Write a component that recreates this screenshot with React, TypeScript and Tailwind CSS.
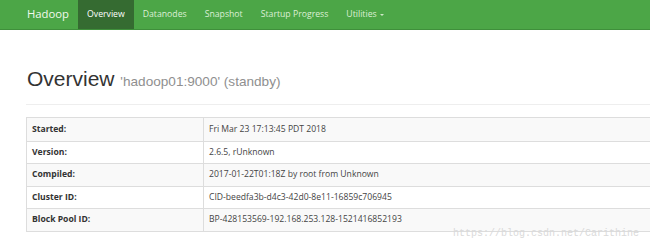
import React from "react";

const rows: [string, string][] = [
  ["Started:", "Fri Mar 23 17:13:45 PDT 2018"],
  ["Version:", "2.6.5, rUnknown"],
  ["Compiled:", "2017-01-22T01:18Z by root from Unknown"],
  ["Cluster ID:", "CID-beedfa3b-d4c3-42d0-8e11-16859c706945"],
  ["Block Pool ID:", "BP-428153569-192.168.253.128-1521416852193"],
];

export default function App() {
  return (
    <div className="relative w-[650px] h-[242px] overflow-hidden bg-white" style={{ fontFamily: '"Open Sans", sans-serif' }}>
      <nav className="h-[30px] bg-[#4ca647] border-b border-[#3f8f3b] flex items-stretch pl-[27px]">
        <div className="flex items-center text-[11.3px] text-[#f2f9ee] pr-[9px]">Hadoop</div>
        <div className="flex items-center px-[9px] bg-[#356b31] text-[8.7px] text-white">Overview</div>
        <div className="flex items-center px-[9px] text-[8.7px] text-[#dcefd6]">Datanodes</div>
        <div className="flex items-center px-[9px] text-[8.7px] text-[#dcefd6]">Snapshot</div>
        <div className="flex items-center px-[9px] text-[8.7px] text-[#dcefd6]">Startup Progress</div>
        <div className="flex items-center px-[9px] text-[8.7px] text-[#dcefd6] gap-[3px]">
          Utilities
          <span className="inline-block w-0 h-0 border-l-[2.5px] border-r-[2.5px] border-t-[2.5px] border-l-transparent border-r-transparent border-t-[#cfe8c8]" />
        </div>
      </nav>
      <div className="pl-[26px]">
        <h1 className="mt-[37px] ml-[1px] leading-[24px] text-[21px] text-[#333]" style={{ fontFamily: '"Liberation Sans", Arial, sans-serif' }}>
          Overview <span className="text-[13.6px] text-[#8f8f8f]">'hadoop01:9000' (standby)</span>
        </h1>
        <div className="mt-[10px] border-t border-[#eeeeee] w-[700px]" />
        <div className="mt-[12px] w-[700px] border border-[#dddddd] text-[8.6px] text-[#333]">
          {rows.map(([k, v], i) => (
            <div
              key={k}
              className={`grid grid-cols-[176px_1fr] h-[22.5px] ${i > 0 ? "border-t border-[#dddddd]" : ""} ${i % 2 === 0 ? "bg-[#f9f9f9]" : "bg-white"}`}
            >
              <div className="flex items-center pl-[5px] font-bold text-[#333]">{k}</div>
              <div className="flex items-center pl-[5px] border-l border-[#dddddd] text-[#444]">{v}</div>
            </div>
          ))}
        </div>
      </div>
      <div className="absolute left-[453px] top-[228px] text-[10px] text-[#dadada] leading-[12px]" style={{ fontFamily: '"Liberation Mono", monospace' }}>
        https://blog.csdn.net/Carithine
      </div>
    </div>
  );
}
